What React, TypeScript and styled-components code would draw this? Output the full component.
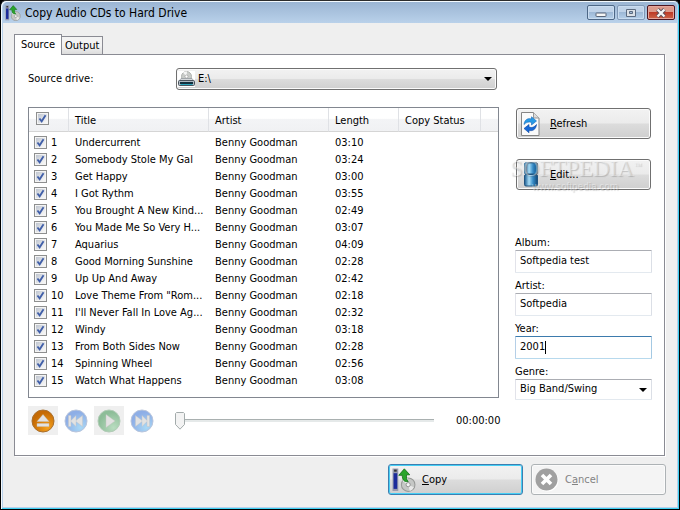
import React, { useState } from "react";
import styled, { createGlobalStyle, css } from "styled-components";

const GlobalStyle = createGlobalStyle`
  *, *::before, *::after { box-sizing: border-box; }
  body { margin: 0; background: #000; }
  body, button, input, select, table {
    font-family: "DejaVu Sans Condensed", "Noto Sans", sans-serif;
    font-size: 11px;
    line-height: 14px;
    color: #000;
  }
`;

const tick =
  "url(\"data:image/svg+xml,%3Csvg xmlns='http://www.w3.org/2000/svg' viewBox='0 0 9 9'%3E%3Cpath d='M2 4.5 3.8 6.800 7 1.8' fill='none' stroke='%23415fa8' stroke-width='1.500'/%3E%3C/svg%3E\")";
const thumb =
  "url(\"data:image/svg+xml,%3Csvg xmlns='http://www.w3.org/2000/svg' viewBox='0 0 10 18'%3E%3Cpath d='M1.5.5h7l1 1v11L5 17.2.5 12.5v-11z' fill='%23f3f3f3' stroke='%23a3abab'/%3E%3C/svg%3E\")";
const arrow =
  "url(\"data:image/svg+xml,%3Csvg xmlns='http://www.w3.org/2000/svg' viewBox='0 0 8 4'%3E%3Cpath d='M0 0h8L4 4z' fill='%23000'/%3E%3C/svg%3E\")";

const Window = styled.main`
  display: flex;
  flex-direction: column;
  min-height: 100vh;
  border-style: solid;
  border-width: 1px;
  border-color: #2b2b2b #000 #000 #000;
  border-radius: 6px 6px 0 0;
  background: #b9d1ea;
  box-shadow: inset 1px 1px #f4fafe, inset -1px -1px #3fd0f2;
  padding: 1px 2px 2px;
`;

const TitleBar = styled.header`
  display: flex;
  align-items: center;
  height: 21px;
  padding: 0 2px;
  gap: 4px;
  border-radius: 5px 5px 0 0;
  background: linear-gradient(#9bb5d3, #b9d1ea);
`;

const Title = styled.h1`
  flex: 1;
  margin: 0;
  font-size: 12px;
  font-weight: 400;
`;

const CaptionButtons = styled.div`
  display: flex;
  gap: 2px;
`;

const CaptionButton = styled.button<{ $kind: "min" | "max" | "close" }>`
  display: grid;
  place-items: center;
  width: 28px;
  height: 15px;
  padding: 0;
  border: 1px solid ${(p) => ({ min: "#4d6786", max: "#8098b6", close: "#4d1620" })[p.$kind]};
  border-radius: 2px;
  box-shadow: inset 0 0 0 1px ${(p) => (p.$kind === "close" ? "#e6a69c" : "#c9dcf0")};
  background: ${(p) =>
    p.$kind === "close"
      ? "linear-gradient(#dc9a8b 0 45%, #bd3b27 50%, #ce6549)"
      : "linear-gradient(#bfd2e8 0 45%, #9db8d6 50%, #b6d0ea)"};
`;

const Client = styled.div`
  flex: 1;
  display: flex;
  flex-direction: column;
  padding: 11px 11px 12px;
  background: #efefef;
`;

const Tabs = styled.div`
  display: flex;
  align-items: flex-end;
  height: 20px;
`;

const Tab = styled.button<{ $active?: boolean }>`
  height: ${(p) => (p.$active ? 21 : 18)}px;
  padding: 0 ${(p) => (p.$active ? 6 : 3)}px;
  border: 1px solid #8a8b93;
  border-bottom: 0;
  ${(p) =>
    p.$active
      ? css`
          margin: 0 -1px -1px 0;
          background: #fff;
          z-index: 1;
        `
      : css`
          background: linear-gradient(#f3f3f3 50%, #dcdcdc);
        `}
`;

const Panel = styled.section`
  flex: 1;
  margin-right: 1px;
  padding: 13px 12px 19px 13px;
  border: 1px solid #8a8b93;
  background: #fff;
  box-shadow: 1px 1px #fff;
`;

const DriveRow = styled.div`
  display: grid;
  grid-template-columns: 148px 1fr;
  align-items: center;
  margin: 0 155px 17px 0;
`;

const glossy = css`
  border: 1px solid #707070;
  border-radius: 3px;
  box-shadow: inset 0 0 0 1px #fbfbfb;
  background: linear-gradient(#f2f2f2, #ebebeb 48%, #dcdcdc 52%, #cfcfcf);
`;

const SelectBox = styled.div`
  position: relative;
  & > svg {
    position: absolute;
    left: 2px;
    top: 3px;
    pointer-events: none;
  }
`;

const DriveSelect = styled.select`
  ${glossy}
  appearance: none;
  display: block;
  width: 100%;
  height: 22px;
  padding: 0 20px 0 21px;
  background: ${arrow} right 4px center / 8px 4px no-repeat,
    linear-gradient(#f2f2f2, #ebebeb 48%, #dcdcdc 52%, #cfcfcf);
`;

const Body = styled.div`
  display: grid;
  grid-template-columns: 1fr 137px;
  column-gap: 16px;
`;

const ListFrame = styled.div`
  height: 291px;
  border: 1px solid #828790;
  overflow: hidden;
`;

const TrackTable = styled.table`
  width: 100%;
  table-layout: fixed;
  border-collapse: separate;
  border-spacing: 0;
  text-align: left;
`;

const Th = styled.th`
  height: 24px;
  padding: 3px 0 0 6px;
  font-weight: 400;
  border-right: 1px solid #dfe1e5;
  border-bottom: 1px solid #d5d5d5;
  background: linear-gradient(#fff 45%, #f3f4f6 50%, #f0f1f3);
  &:last-child {
    border-right: 0;
  }
`;

const CheckTh = styled(Th)`
  padding: 0 0 3px 7px;
  vertical-align: middle;
`;

const SpacerRow = styled.tr`
  height: 2px;
  & > td {
    padding: 0;
  }
`;

const Td = styled.td`
  height: 17px;
  padding: 0 0 0 6px;
  white-space: nowrap;
  overflow: hidden;
`;

const NumberCell = styled(Td)`
  padding-left: 5px;
`;

const NumberLabel = styled.label`
  display: flex;
  align-items: center;
  gap: 4px;
`;

const Check = styled.input.attrs({ type: "checkbox" })`
  appearance: none;
  display: block;
  flex: none;
  width: 13px;
  height: 13px;
  margin: 0;
  border: 1px solid #8e8f8f;
  box-shadow: inset 0 0 0 1px #f4f4f4;
  background: linear-gradient(135deg, #b8bfcb, #f4f4f4 80%);
  &:checked {
    background: ${tick} center / 11px 11px no-repeat, linear-gradient(135deg, #b8bfcb, #f4f4f4 80%);
  }
`;

const Side = styled.aside`
  position: relative;
  display: flex;
  flex-direction: column;
  padding-top: 1px;
`;

const ButtonText = styled.span`
  position: relative;
  z-index: 2;
`;

const PushButton = styled.button<{ $primary?: boolean }>`
  ${glossy}
  display: grid;
  grid-template-columns: 22px 1fr;
  align-items: center;
  column-gap: 8px;
  width: 135px;
  height: 31px;
  padding: 0 3px;
  text-align: left;
  ${(p) =>
    p.$primary &&
    css`
      border-color: #3c7fb1;
      box-shadow: inset 0 0 0 1px #46cff5;
    `}
  &:disabled {
    color: #838383;
    border-color: #adb2b5;
    background: #f4f4f4;
  }
`;

const Actions = styled.div`
  display: grid;
  gap: 20px;
  padding-left: 1px;
`;

const Watermark = styled.div`
  position: absolute;
  z-index: 1;
  left: -5px;
  top: 47px;
  width: 150px;
  color: rgba(255, 255, 255, 0.4);
  text-shadow: 1px 1px 1px rgba(90, 90, 90, 0.3);
  font-family: "Liberation Serif", serif;
  font-size: 23px;
  line-height: 24px;
  white-space: nowrap;
  pointer-events: none;
`;

const WatermarkSup = styled.span`
  font-size: 8px;
  vertical-align: 8px;
`;

const WatermarkUrl = styled.div`
  padding-left: 22px;
  font-family: "Liberation Sans", sans-serif;
  font-size: 10px;
  line-height: 12px;
`;

const Fields = styled.div`
  display: grid;
  gap: 6px;
  margin-top: 46px;
`;

const Field = styled.label`
  display: block;
  position: relative;
`;

const TextInput = styled.input<{ $active?: boolean }>`
  display: block;
  width: 100%;
  height: 23px;
  padding: 0 5px 3px 4px;
  border: 1px solid;
  border-color: ${(p) => (p.$active ? "#3d7bad #a4c9e3 #b7d9ed #b5cfe7" : "#abadb3 #dbdfe6 #e3e9ef #e2e3ea")};
  border-radius: 1px;
  background: #fff;
`;

const GenreSelect = styled.select`
  appearance: none;
  display: block;
  width: 100%;
  height: 21px;
  padding: 0 16px 2px 4px;
  border: 1px solid;
  border-color: #abadb3 #dbdfe6 #e3e9ef #e2e3ea;
  border-radius: 1px;
  background: ${arrow} right 4px center / 8px 4px no-repeat #fff;
`;

const Caret = styled.span`
  position: absolute;
  left: 30px;
  bottom: 5px;
  width: 1px;
  height: 13px;
  background: #000;
`;

const Player = styled.div`
  display: grid;
  grid-template-columns: repeat(4, 30px) 1fr 43px;
  align-items: center;
  column-gap: 3px;
  margin-top: 8px;
`;

const PlayButton = styled.button<{ $boxed?: boolean }>`
  display: grid;
  place-items: center;
  width: 30px;
  height: 29px;
  padding: 0;
  border: 0;
  background: ${(p) => (p.$boxed ? "#efefef" : "#fff")};
`;

const Seek = styled.input.attrs({ type: "range" })`
  appearance: none;
  height: 18px;
  margin: 0 18px 0 15px;
  background: linear-gradient(#a9b0b0, #a9b0b0) 5px 7px / calc(100% - 6px) 1px no-repeat,
    linear-gradient(#e5e9e9, #e5e9e9) 5px 8px / calc(100% - 6px) 2px no-repeat;
  &::-webkit-slider-thumb {
    appearance: none;
    width: 10px;
    height: 18px;
    background: ${thumb} center / 10px 18px no-repeat;
  }
`;

const Footer = styled.footer`
  display: flex;
  justify-content: flex-end;
  gap: 8px;
  margin-top: 8px;
`;

const DiscIcon = () => (
  <g>
    <circle cx="15.5" cy="16" r="6.5" fill="#c5c7c5" stroke="#979997" />
    <path d="M15.5 16 10 12.5A6.5 6.5 0 0 1 15 9.6z" fill="#eef3ee" />
    <path d="m15.5 16 5.5 2.5a6 6 0 0 1-4 3.5z" fill="#e9e9e9" />
    <circle cx="15.5" cy="16" r="2" fill="#f4f4f4" stroke="#888" strokeWidth=".8" />
  </g>
);

const CopyIcon = ({ size }: { size: number }) => (
  <svg width={size} height={size} viewBox="0 0 23 23" aria-hidden="true">
    <rect x=".5" y=".5" width="5.5" height="21.5" fill="#9699ad" />
    <rect x="1.5" y="5" width="3.5" height="15" fill="#1c2b9b" />
    <rect x="2" y="1.5" width="2.5" height="2" fill="#333" />
    <DiscIcon />
    <path d="M15.5 13C11 13.500 10 11 9.800 7H6.500L11.800.8 17 6.500h-3c-.3 3-.2 4.500 1.500 6.500z" fill="#29a52b" stroke="#157019" strokeWidth=".8" />
  </svg>
);

const DriveIcon = () => (
  <svg width="17" height="16" viewBox="0 0 17 16" aria-hidden="true">
    <rect width="17" height="16" fill="#fff" />
    <circle cx="8.5" cy="5.5" r="5" fill="#c9ccc9" stroke="#b0b2b0" />
    <path d="M8.5 5.500 5 1.500a5 5 0 0 1 4-1z" fill="#f5f5f5" />
    <circle cx="8.5" cy="5.5" r="1.5" fill="#fff" stroke="#999" strokeWidth=".6" />
    <path d="M3 7.500h11l1.500 2h-14z" fill="#d4d7da" stroke="#8d9298" strokeWidth=".7" />
    <rect x=".5" y="9.5" width="16" height="5" rx="1" fill="#aeb8c1" stroke="#4b555e" />
    <rect x="2" y="11" width="13" height="2" fill="#13313f" />
    <path d="M2.500 13.500h12" stroke="#2ba5bd" />
  </svg>
);

const RefreshIcon = () => (
  <svg width="22" height="24" viewBox="0 0 22 24" aria-hidden="true">
    <path d="M1.5.5h12L19 6v17.500H1.500z" fill="#fafafa" stroke="#858585" />
    <path d="M13.5.5V6H19" fill="#ddd" stroke="#999" />
    <path d="M4 12.500C4.500 7.500 8 5.800 11.500 7V4.800l5 4.200-5 4V10.500C9 9.500 6.500 10 4 12.500z" fill="#279ae5" stroke="#1267bb" strokeWidth=".6" />
    <path d="M16.500 12.500c-.5 5-4 7-7.500 5.800v2.500l-5-4.300 5-4v2.500c2.500 1 5 .5 7.500-2.500z" fill="#1668d6" stroke="#0c439e" strokeWidth=".6" />
  </svg>
);

const EditIcon = () => (
  <svg width="22" height="25" viewBox="0 0 22 25" aria-hidden="true">
    <defs>
      <linearGradient id="edit-blue">
        <stop stopColor="#18598f" />
        <stop offset=".35" stopColor="#a7dcf6" />
        <stop offset=".65" stopColor="#368bc6" />
        <stop offset="1" stopColor="#104777" />
      </linearGradient>
    </defs>
    <rect x="4.5" y=".8" width="13" height="11.2" rx="1.5" fill="url(#edit-blue)" stroke="#22547f" />
    <rect x="4.5" y="12.5" width="13" height="11.5" rx="1.5" fill="url(#edit-blue)" stroke="#22547f" />
  </svg>
);

const CancelIcon = () => (
  <svg width="24" height="24" viewBox="0 0 24 24" aria-hidden="true">
    <circle cx="12.5" cy="12.5" r="11" fill="#fff" />
    <circle cx="11.5" cy="11.5" r="11" fill="#a0a0a0" />
    <path d="m7 7 9 9m0-9-9 9" stroke="#fff" strokeWidth="3.6" />
  </svg>
);

type PlayKind = "eject" | "previous" | "play" | "next";

const playColors: Record<PlayKind, [string, string, string]> = {
  eject: ["#f4a01c", "#c56a04", "#a9702f"],
  previous: ["#a9d8f5", "#8eaee6", "#b9c5dc"],
  play: ["#b9dcc0", "#8dbd98", "#b2ccb7"],
  next: ["#a9d8f5", "#8eaee6", "#b9c5dc"],
};

const playShapes: Record<PlayKind, string> = {
  eject: "M12 5.500 18 12.500H6zM6 14.500h12v3H6z",
  previous: "M4.500 6.500h2.500v5l5-5v5l6.500-5v11l-6.500-5v5l-5-5v5H4.500z",
  play: "M9 5.500 18 12 9 18.500z",
  next: "M19.500 6.500H17v5l-5-5v5l-6.500-5v11l6.500-5v5l5-5v5h2.500z",
};

const PlayIcon = ({ kind }: { kind: PlayKind }) => {
  const [light, dark, rim] = playColors[kind];
  return (
    <svg width="24" height="24" viewBox="0 0 24 24" aria-hidden="true">
      <defs>
        <radialGradient id={`disc-${kind}`} cx=".7" cy=".8" r=".7">
          <stop stopColor={light} />
          <stop offset="1" stopColor={dark} />
        </radialGradient>
      </defs>
      <circle cx="12" cy="12" r="11" fill={`url(#disc-${kind})`} stroke={rim} />
      <path d={playShapes[kind]} fill="#e2e2e2" stroke="#c6c3c0" strokeWidth=".4" />
    </svg>
  );
};

const titles: [string, string][] = [
  ["Undercurrent", "03:10"],
  ["Somebody Stole My Gal", "03:24"],
  ["Get Happy", "03:00"],
  ["I Got Rythm", "03:55"],
  ["You Brought A New Kind...", "02:49"],
  ["You Made Me So Very H...", "03:07"],
  ["Aquarius", "04:09"],
  ["Good Morning Sunshine", "02:28"],
  ["Up Up And Away", "02:42"],
  ['Love Theme From "Rom...', "02:18"],
  ["I'll Never Fall In Love Ag...", "02:32"],
  ["Windy", "03:18"],
  ["From Both Sides Now", "02:28"],
  ["Spinning Wheel", "02:56"],
  ["Watch What Happens", "03:08"],
];

export default function App() {
  const [checked, setChecked] = useState(() => titles.map(() => true));
  const all = checked.every(Boolean);

  return (
    <>
      <GlobalStyle />
      <Window>
        <TitleBar>
          <CopyIcon size={16} />
          <Title>Copy Audio CDs to Hard Drive</Title>
          <CaptionButtons>
            <CaptionButton $kind="min" aria-label="Minimize">
              <svg width="12" height="12" viewBox="0 0 12 12"><rect x="1" y="6" width="10" height="3.5" rx=".5" fill="#f5f5f5" stroke="#586579" /></svg>
            </CaptionButton>
            <CaptionButton $kind="max" aria-label="Maximize">
              <svg width="12" height="12" viewBox="0 0 12 12"><path d="M1.500 2.500h9v7h-9z" fill="#dce1e7" stroke="#5c6b80" /><path d="M4.500 4.500h3v2h-3z" fill="#9fb8d3" stroke="#5c6b80" /></svg>
            </CaptionButton>
            <CaptionButton $kind="close" aria-label="Close">
              <svg width="12" height="12" viewBox="0 0 12 12"><path d="m2.500 2.500 7 7m0-7-7 7" stroke="#5a4a55" strokeWidth="4" /><path d="m2.500 2.500 7 7m0-7-7 7" stroke="#f5f5f5" strokeWidth="2.4" /></svg>
            </CaptionButton>
          </CaptionButtons>
        </TitleBar>
        <Client>
          <Tabs role="tablist">
            <Tab $active role="tab" aria-selected="true">Source</Tab>
            <Tab role="tab" aria-selected="false">Output</Tab>
          </Tabs>
          <Panel role="tabpanel">
            <DriveRow>
              <label htmlFor="drive">Source drive:</label>
              <SelectBox>
                <DriveSelect id="drive"><option>E:\</option></DriveSelect>
                <DriveIcon />
              </SelectBox>
            </DriveRow>
            <Body>
              <div>
                <ListFrame>
                  <TrackTable>
                    <colgroup>
                      <col width="40" />
                      <col />
                      <col width="120" />
                      <col width="70" />
                      <col width="82" />
                      <col width="17" />
                    </colgroup>
                    <thead>
                      <tr>
                        <CheckTh>
                          <Check aria-label="Select all tracks" checked={all} onChange={() => setChecked(checked.map(() => !all))} />
                        </CheckTh>
                        <Th>Title</Th>
                        <Th>Artist</Th>
                        <Th>Length</Th>
                        <Th>Copy Status</Th>
                        <Th />
                      </tr>
                    </thead>
                    <tbody>
                      <SpacerRow aria-hidden="true"><td /></SpacerRow>
                      {titles.map(([title, length], i) => (
                        <tr key={title}>
                          <NumberCell>
                            <NumberLabel>
                              <Check checked={checked[i]} onChange={() => setChecked(checked.map((c, j) => (j === i ? !c : c)))} />
                              {i + 1}
                            </NumberLabel>
                          </NumberCell>
                          <Td>{title}</Td>
                          <Td>Benny Goodman</Td>
                          <Td>{length}</Td>
                          <Td />
                          <Td />
                        </tr>
                      ))}
                    </tbody>
                  </TrackTable>
                </ListFrame>
                <Player>
                  <PlayButton $boxed aria-label="Eject"><PlayIcon kind="eject" /></PlayButton>
                  <PlayButton aria-label="Previous"><PlayIcon kind="previous" /></PlayButton>
                  <PlayButton $boxed aria-label="Play"><PlayIcon kind="play" /></PlayButton>
                  <PlayButton aria-label="Next"><PlayIcon kind="next" /></PlayButton>
                  <Seek aria-label="Position" min={0} max={100} defaultValue={0} />
                  <time>00:00:00</time>
                </Player>
              </div>
              <Side>
                <Actions>
                  <PushButton><RefreshIcon /><ButtonText><u>R</u>efresh</ButtonText></PushButton>
                  <PushButton><EditIcon /><ButtonText><u>E</u>dit...</ButtonText></PushButton>
                </Actions>
                <Watermark aria-hidden="true">
                  SOFTPEDIA<WatermarkSup>™</WatermarkSup>
                  <WatermarkUrl>www.softpedia.com</WatermarkUrl>
                </Watermark>
                <Fields>
                  <Field>Album:<TextInput defaultValue="Softpedia test" /></Field>
                  <Field>Artist:<TextInput defaultValue="Softpedia" /></Field>
                  <Field>Year:<TextInput $active defaultValue="2001" /><Caret /></Field>
                  <Field>Genre:<GenreSelect><option>Big Band/Swing</option></GenreSelect></Field>
                </Fields>
              </Side>
            </Body>
          </Panel>
          <Footer>
            <PushButton $primary><CopyIcon size={24} /><ButtonText><u>C</u>opy</ButtonText></PushButton>
            <PushButton disabled><CancelIcon /><ButtonText>C<u>a</u>ncel</ButtonText></PushButton>
          </Footer>
        </Client>
      </Window>
    </>
  );
}
